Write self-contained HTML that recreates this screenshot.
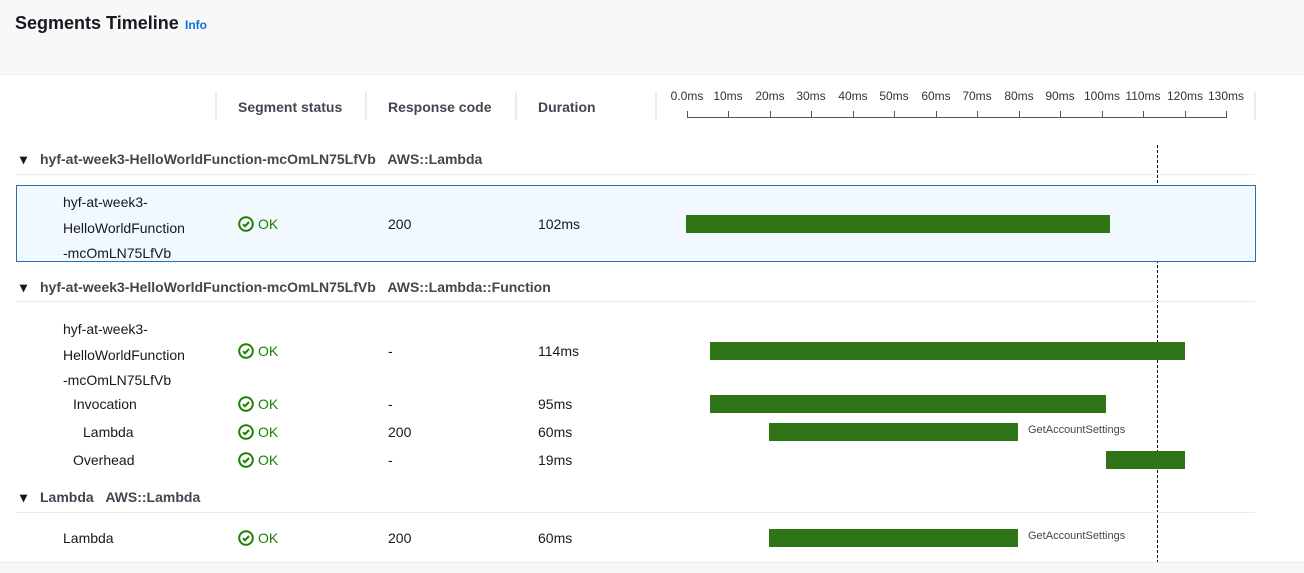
<!DOCTYPE html>
<html><head><style>
*{margin:0;padding:0;box-sizing:border-box}
body{width:1304px;height:573px;background:#fff;font-family:"Liberation Sans",sans-serif;color:#16191f;position:relative;overflow:hidden;font-size:14px}
.a{position:absolute;white-space:nowrap}
.b{font-weight:bold}
.vl{position:absolute;width:2px;background:#eaeded}
.hl{position:absolute;height:1px;background:#e9ebed;left:16px;width:1239px}
.bar{position:absolute;height:18px;background:#2f7518}
.ok{position:absolute;color:#1d8102;font-size:14px;line-height:16px}
.ok svg{vertical-align:-3px;margin-right:4px}
.tk{position:absolute;top:111px;width:1px;height:7px;background:#555}
.tl{position:absolute;top:89px;font-size:12px;color:#333;transform:translateX(-50%)}
.gl{position:absolute;font-size:11px;color:#414750}
</style></head><body>
<div class="a" style="left:0;top:0;width:1304px;height:75px;background:#f8f8f8;border-bottom:1px solid #e9ebed"></div>
<div class="a b" style="left:15px;top:13px;font-size:18px">Segments Timeline</div>
<div class="a b" style="left:185px;top:18px;font-size:12px;color:#0972d3">Info</div>

<div class="vl" style="left:215px;top:92px;height:28px"></div>
<div class="vl" style="left:365px;top:92px;height:28px"></div>
<div class="vl" style="left:515px;top:92px;height:28px"></div>
<div class="vl" style="left:655px;top:92px;height:28px"></div>
<div class="vl" style="left:1254px;top:92px;height:28px"></div>
<div class="a b" style="left:238px;top:99px;color:#414750">Segment status</div>
<div class="a b" style="left:388px;top:99px;color:#414750">Response code</div>
<div class="a b" style="left:538px;top:99px;color:#414750">Duration</div>

<div class="a" style="left:687px;top:117px;width:540px;height:1px;background:#555"></div>

<div class="a" style="left:1157px;top:145px;height:418px;border-left:1px dashed #000"></div>

<div class="a b" style="left:20px;top:151px">▾</div>
<div class="a b" style="left:40px;top:151px;color:#414750">hyf-at-week3-HelloWorldFunction-mcOmLN75LfVb &nbsp;&nbsp;AWS::Lambda</div>
<div class="hl" style="top:174px"></div>
<div class="a" style="left:16px;top:185px;width:1240px;height:77px;background:#f1f8fe;border:1px solid #2a6db0"></div>
<div class="a" style="left:63px;top:190px;line-height:25.5px">hyf-at-week3-<br>HelloWorldFunction<br>-mcOmLN75LfVb</div>
<div class="ok" style="left:238px;top:216px"><svg width="16" height="16" viewBox="0 0 16 16"><circle cx="8" cy="8" r="6.8" fill="none" stroke="#1d8102" stroke-width="2"/><path d="M5 8.2l2 2 4-4.2" fill="none" stroke="#1d8102" stroke-width="2"/></svg>OK</div>
<div class="a" style="left:388px;top:216px">200</div>
<div class="a" style="left:538px;top:216px">102ms</div>
<div class="bar" style="left:686px;top:215px;width:424px"></div>

<div class="a b" style="left:20px;top:279px">▾</div>
<div class="a b" style="left:40px;top:279px;color:#414750">hyf-at-week3-HelloWorldFunction-mcOmLN75LfVb &nbsp;&nbsp;AWS::Lambda::Function</div>
<div class="hl" style="top:301px"></div>
<div class="a" style="left:63px;top:317px;line-height:25.5px">hyf-at-week3-<br>HelloWorldFunction<br>-mcOmLN75LfVb</div>
<div class="ok" style="left:238px;top:343px"><svg width="16" height="16" viewBox="0 0 16 16"><circle cx="8" cy="8" r="6.8" fill="none" stroke="#1d8102" stroke-width="2"/><path d="M5 8.2l2 2 4-4.2" fill="none" stroke="#1d8102" stroke-width="2"/></svg>OK</div>
<div class="a" style="left:388px;top:343px">-</div>
<div class="a" style="left:538px;top:343px">114ms</div>
<div class="bar" style="left:710px;top:342px;width:475px"></div>

<div class="a" style="left:73px;top:396px">Invocation</div>
<div class="ok" style="left:238px;top:396px"><svg width="16" height="16" viewBox="0 0 16 16"><circle cx="8" cy="8" r="6.8" fill="none" stroke="#1d8102" stroke-width="2"/><path d="M5 8.2l2 2 4-4.2" fill="none" stroke="#1d8102" stroke-width="2"/></svg>OK</div>
<div class="a" style="left:388px;top:396px">-</div>
<div class="a" style="left:538px;top:396px">95ms</div>
<div class="bar" style="left:710px;top:395px;width:396px"></div>

<div class="a" style="left:83px;top:424px">Lambda</div>
<div class="ok" style="left:238px;top:424px"><svg width="16" height="16" viewBox="0 0 16 16"><circle cx="8" cy="8" r="6.8" fill="none" stroke="#1d8102" stroke-width="2"/><path d="M5 8.2l2 2 4-4.2" fill="none" stroke="#1d8102" stroke-width="2"/></svg>OK</div>
<div class="a" style="left:388px;top:424px">200</div>
<div class="a" style="left:538px;top:424px">60ms</div>
<div class="bar" style="left:769px;top:423px;width:249px"></div>
<div class="gl" style="left:1028px;top:424px">GetAccountSettings</div>

<div class="a" style="left:73px;top:452px">Overhead</div>
<div class="ok" style="left:238px;top:452px"><svg width="16" height="16" viewBox="0 0 16 16"><circle cx="8" cy="8" r="6.8" fill="none" stroke="#1d8102" stroke-width="2"/><path d="M5 8.2l2 2 4-4.2" fill="none" stroke="#1d8102" stroke-width="2"/></svg>OK</div>
<div class="a" style="left:388px;top:452px">-</div>
<div class="a" style="left:538px;top:452px">19ms</div>
<div class="bar" style="left:1106px;top:451px;width:79px"></div>

<div class="a b" style="left:20px;top:489px">▾</div>
<div class="a b" style="left:40px;top:489px;color:#414750">Lambda &nbsp;&nbsp;AWS::Lambda</div>
<div class="hl" style="top:512px"></div>
<div class="a" style="left:63px;top:530px">Lambda</div>
<div class="ok" style="left:238px;top:530px"><svg width="16" height="16" viewBox="0 0 16 16"><circle cx="8" cy="8" r="6.8" fill="none" stroke="#1d8102" stroke-width="2"/><path d="M5 8.2l2 2 4-4.2" fill="none" stroke="#1d8102" stroke-width="2"/></svg>OK</div>
<div class="a" style="left:388px;top:530px">200</div>
<div class="a" style="left:538px;top:530px">60ms</div>
<div class="bar" style="left:769px;top:529px;width:249px"></div>
<div class="gl" style="left:1028px;top:530px">GetAccountSettings</div>

<div class="a" style="left:0;top:562px;width:1304px;height:11px;background:#f8f8f8;border-top:1px solid #e9ebed"></div>

<div class="tk" style="left:687px"></div><div class="tl" style="left:687px">0.0ms</div>
<div class="tk" style="left:728px"></div><div class="tl" style="left:728px">10ms</div>
<div class="tk" style="left:770px"></div><div class="tl" style="left:770px">20ms</div>
<div class="tk" style="left:811px"></div><div class="tl" style="left:811px">30ms</div>
<div class="tk" style="left:853px"></div><div class="tl" style="left:853px">40ms</div>
<div class="tk" style="left:894px"></div><div class="tl" style="left:894px">50ms</div>
<div class="tk" style="left:936px"></div><div class="tl" style="left:936px">60ms</div>
<div class="tk" style="left:977px"></div><div class="tl" style="left:977px">70ms</div>
<div class="tk" style="left:1019px"></div><div class="tl" style="left:1019px">80ms</div>
<div class="tk" style="left:1060px"></div><div class="tl" style="left:1060px">90ms</div>
<div class="tk" style="left:1102px"></div><div class="tl" style="left:1102px">100ms</div>
<div class="tk" style="left:1143px"></div><div class="tl" style="left:1143px">110ms</div>
<div class="tk" style="left:1185px"></div><div class="tl" style="left:1185px">120ms</div>
<div class="tk" style="left:1226px"></div><div class="tl" style="left:1226px">130ms</div>
</body></html>
